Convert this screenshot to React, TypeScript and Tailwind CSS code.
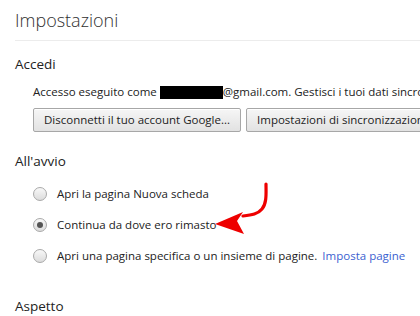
import React from 'react';

const font = { fontFamily: '"Open Sans", "Noto Sans", sans-serif' };

function Radio({ checked }: { checked?: boolean }) {
  return (
    <span className="flex h-[14px] w-[14px] shrink-0 items-center justify-center rounded-full border border-[#a9a9a9] bg-gradient-to-b from-[#f8f8f8] to-[#dcdcdc]">
      {checked && <span className="h-[6px] w-[6px] rounded-full bg-[#555]" />}
    </span>
  );
}

function Button({ children }: { children: React.ReactNode }) {
  return (
    <button className="h-[24px] shrink-0 whitespace-nowrap rounded-[2px] border border-[#a7a7a7] bg-gradient-to-b from-[#f6f6f6] to-[#e2e2e2] px-[10px] text-[11.5px] text-[#222] shadow-[0_1px_0_#fff_inset]">
      {children}
    </button>
  );
}

export default function App() {
  return (
    <div className="relative h-[316px] w-[420px] overflow-hidden bg-white pl-[15px] text-[#222]" style={font}>
      <h1 className="pt-[8px] pb-[7px] text-[18px] font-light leading-[25px] text-[#303030] border-b border-[#ececec]">
        Impostazioni
      </h1>

      {/* Accedi */}
      <section className="pt-[14px]">
        <h2 className="text-[13.5px] leading-[18px]">Accedi</h2>
        <div className="pl-[18px] pt-[11px]">
          <p className="flex items-center whitespace-nowrap text-[11.5px] leading-[16px]">
            Accesso eseguito come&nbsp;
            <span className="inline-block h-[13px] w-[63px] shrink-0 bg-black" />
            @gmail.com. Gestisci i tuoi dati sincronizzati
          </p>
          <div className="mt-[8px] flex gap-[5px]">
            <Button>Disconnetti il tuo account Google...</Button>
            <Button>Impostazioni di sincronizzazione avanzate</Button>
          </div>
        </div>
      </section>

      {/* All'avvio */}
      <section className="pt-[20px]">
        <h2 className="text-[13.5px] leading-[18px]">All'avvio</h2>
        <div className="flex flex-col gap-[15px] pl-[18px] pt-[16px] text-[11.5px] leading-[16px]">
          <label className="flex items-center gap-[10px] whitespace-nowrap">
            <Radio />
            Apri la pagina Nuova scheda
          </label>
          <label className="flex items-center gap-[10px] whitespace-nowrap">
            <Radio checked />
            Continua da dove ero rimasto
          </label>
          <label className="flex items-center gap-[10px] whitespace-nowrap">
            <Radio />
            <span>
              Apri una pagina specifica o un insieme di pagine.{' '}
              <a className="ml-[2px] text-[#3b5fd0]">Imposta pagine</a>
            </span>
          </label>
        </div>
      </section>

      {/* Aspetto */}
      <section className="pt-[33px]">
        <h2 className="text-[13.5px] leading-[18px]">Aspetto</h2>
      </section>

      {/* annotation arrow */}
      <svg className="absolute left-[210px] top-[181px]" width="64" height="58" viewBox="0 0 64 58">
        <path d="M56 3 C56 12 57 22 52 28 C48 33 42 34 33 35" fill="none" stroke="#ee0000" strokeWidth="3.2" strokeLinecap="round" />
        <path d="M5 43 L33 31 L27 40 L34 53 Z" fill="#ee0000" />
      </svg>
    </div>
  );
}
